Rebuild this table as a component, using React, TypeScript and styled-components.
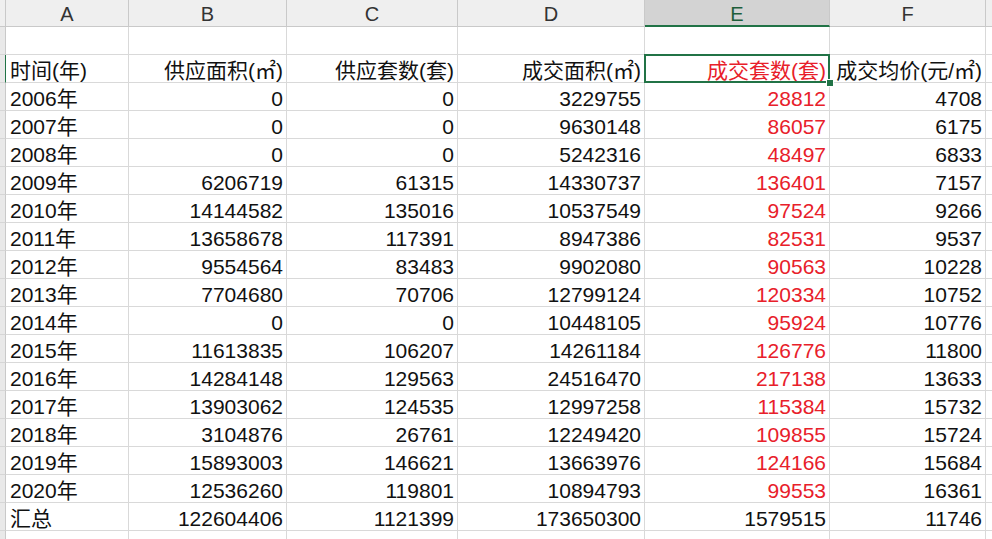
import React from "react";
import styled, { createGlobalStyle, css } from "styled-components";

const Global = createGlobalStyle`
  html, body { margin: 0; padding: 0; background: #ffffff; overflow: hidden; }
  body { font-family: "Liberation Sans", "Noto Sans CJK SC", sans-serif; }
`;

const COLS = [6, 123, 158, 171, 187, 185, 156, 40];
const GRID = COLS.map((w) => `${w}px`).join(" ");

const Sheet = styled.div`
  display: grid;
  grid-template-columns: ${GRID};
  grid-auto-rows: 28px;
  grid-template-rows: 27px;
  width: 992px;
  height: 539px;
  overflow: hidden;
  color: #111;
`;

const ColHead = styled.div<{ $sel?: boolean }>`
  box-sizing: border-box;
  background: ${(p) => (p.$sel ? "#d3d3d3" : "#efefef")};
  border-right: 1px solid #c9c9c9;
  border-bottom: ${(p) => (p.$sel ? "2px solid #217346" : "1px solid #c9c9c9")};
  display: flex;
  align-items: center;
  justify-content: center;
  font-size: 20px;
  color: ${(p) => (p.$sel ? "#1e5e3a" : "#333")};
  padding-top: ${(p) => (p.$sel ? "4px" : "3px")};
`;

const RowHead = styled.div<{ $sel?: boolean }>`
  box-sizing: border-box;
  background: #e9e9e9;
  border-right: 1px solid ${(p) => (p.$sel ? "#217346" : "#c9c9c9")};
  border-bottom: 1px solid #d6d6d6;
`;

const Cell = styled.div<{ $align?: "left" | "right"; $red?: boolean; $active?: boolean }>`
  position: relative;
  box-sizing: border-box;
  border-right: 1px solid #d9d9d9;
  border-bottom: 1px solid #d9d9d9;
  display: flex;
  align-items: flex-end;
  justify-content: ${(p) => (p.$align === "left" ? "flex-start" : "flex-end")};
  padding: 0 3px 0 4px;
  font-size: 21px;
  line-height: 22px;
  white-space: nowrap;
  color: ${(p) => (p.$red ? "#e8202a" : "#111")};
  ${(p) =>
    p.$active &&
    css`
      overflow: visible;
    `}
`;

const ActiveBox = styled.div`
  position: absolute;
  left: -1px;
  top: -1px;
  right: -1px;
  bottom: -1px;
  border: 2px solid #217346;
  pointer-events: none;
  z-index: 2;
`;

const FillHandle = styled.div`
  position: absolute;
  right: -5px;
  bottom: -5px;
  width: 6px;
  height: 6px;
  background: #217346;
  border: 1px solid #ffffff;
  z-index: 3;
`;

const letters = ["A", "B", "C", "D", "E", "F", ""];

const header = ["时间(年)", "供应面积(㎡)", "供应套数(套)", "成交面积(㎡)", "成交套数(套)", "成交均价(元/㎡)"];

const rows: (string | number)[][] = [
  ["2006年", 0, 0, 3229755, 28812, 4708],
  ["2007年", 0, 0, 9630148, 86057, 6175],
  ["2008年", 0, 0, 5242316, 48497, 6833],
  ["2009年", 6206719, 61315, 14330737, 136401, 7157],
  ["2010年", 14144582, 135016, 10537549, 97524, 9266],
  ["2011年", 13658678, 117391, 8947386, 82531, 9537],
  ["2012年", 9554564, 83483, 9902080, 90563, 10228],
  ["2013年", 7704680, 70706, 12799124, 120334, 10752],
  ["2014年", 0, 0, 10448105, 95924, 10776],
  ["2015年", 11613835, 106207, 14261184, 126776, 11800],
  ["2016年", 14284148, 129563, 24516470, 217138, 13633],
  ["2017年", 13903062, 124535, 12997258, 115384, 15732],
  ["2018年", 3104876, 26761, 12249420, 109855, 15724],
  ["2019年", 15893003, 146621, 13663976, 124166, 15684],
  ["2020年", 12536260, 119801, 10894793, 99553, 16361],
];

const total: (string | number)[] = ["汇总", 122604406, 1121399, 173650300, 1579515, 11746];

export default function App() {
  return (
    <>
      <Global />
      <Sheet>
        <ColHead />
        {letters.map((l, i) => (
          <ColHead key={`h${i}`} $sel={l === "E"}>
            {l}
          </ColHead>
        ))}

        <RowHead />
        {letters.map((_, i) => (
          <Cell key={`e${i}`} />
        ))}

        <RowHead $sel />
        {header.map((h, i) => (
          <Cell key={`t${i}`} $align={i === 0 ? "left" : "right"} $red={i === 4} $active={i === 4}>
            {h}
            {i === 4 && (
              <>
                <ActiveBox />
                <FillHandle />
              </>
            )}
          </Cell>
        ))}
        <Cell />

        {rows.map((r, ri) => (
          <React.Fragment key={`r${ri}`}>
            <RowHead />
            {r.map((v, i) => (
              <Cell key={i} $align={i === 0 ? "left" : "right"} $red={i === 4}>
                {v}
              </Cell>
            ))}
            <Cell />
          </React.Fragment>
        ))}

        <RowHead />
        {total.map((v, i) => (
          <Cell key={`s${i}`} $align={i === 0 ? "left" : "right"}>
            {v}
          </Cell>
        ))}
        <Cell />

        <RowHead />
        {letters.map((_, i) => (
          <Cell key={`z${i}`} />
        ))}
      </Sheet>
    </>
  );
}
